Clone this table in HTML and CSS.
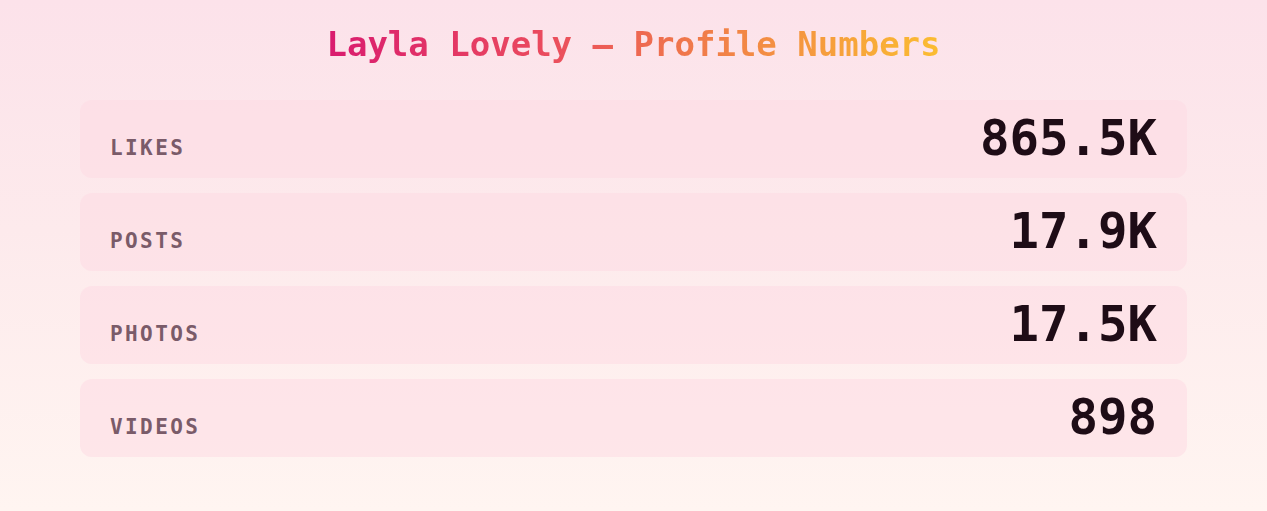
FILE: index.html
```html
<!DOCTYPE html>
<html lang="en">
<head>
<meta charset="utf-8">
<title>Layla Lovely — Profile Numbers</title>
<link rel="stylesheet" href="styles.css">
</head>
<body>
<main class="page">
  <h1 class="title"><span class="title-text">Layla Lovely — Profile Numbers</span></h1>
  <section class="stats">
    <div class="stat"><span class="label">Likes</span><span class="value">865.5K</span></div>
    <div class="stat"><span class="label">Posts</span><span class="value">17.9K</span></div>
    <div class="stat"><span class="label">Photos</span><span class="value">17.5K</span></div>
    <div class="stat"><span class="label">Videos</span><span class="value">898</span></div>
  </section>
</main>
</body>
</html>
```

FILE: styles.css
```css
html, body {
  margin: 0;
  padding: 0;
  height: 100%;
}
body {
  background: linear-gradient(180deg, #fce2ea 0%, #fdeaec 45%, #fff5f1 100%);
  font-family: "DejaVu Sans Mono", "Liberation Mono", monospace;
}
.page {
  padding: 24px 80px 0;
  box-sizing: border-box;
}
.title {
  margin: 0 0 36px;
  text-align: center;
  font-size: 34px;
  font-weight: bold;
  line-height: 40px;
}
.title-text {
  background: linear-gradient(90deg, #d91b6f 0%, #ea4a5e 35%, #f07a4a 60%, #fbbd31 100%);
  -webkit-background-clip: text;
  background-clip: text;
  color: transparent;
}
.stats {
  display: flex;
  flex-direction: column;
  gap: 15px;
}
.stat {
  display: flex;
  justify-content: space-between;
  align-items: baseline;
  padding: 15px 30px;
  border-radius: 12px;
  background: rgba(253, 218, 228, 0.55);
}
.label {
  font-size: 21px;
  font-weight: bold;
  letter-spacing: 2.4px;
  text-transform: uppercase;
  color: #7a5b69;
}
.value {
  font-size: 49px;
  font-weight: bold;
  line-height: 48px;
  color: #1e0c16;
}
```
